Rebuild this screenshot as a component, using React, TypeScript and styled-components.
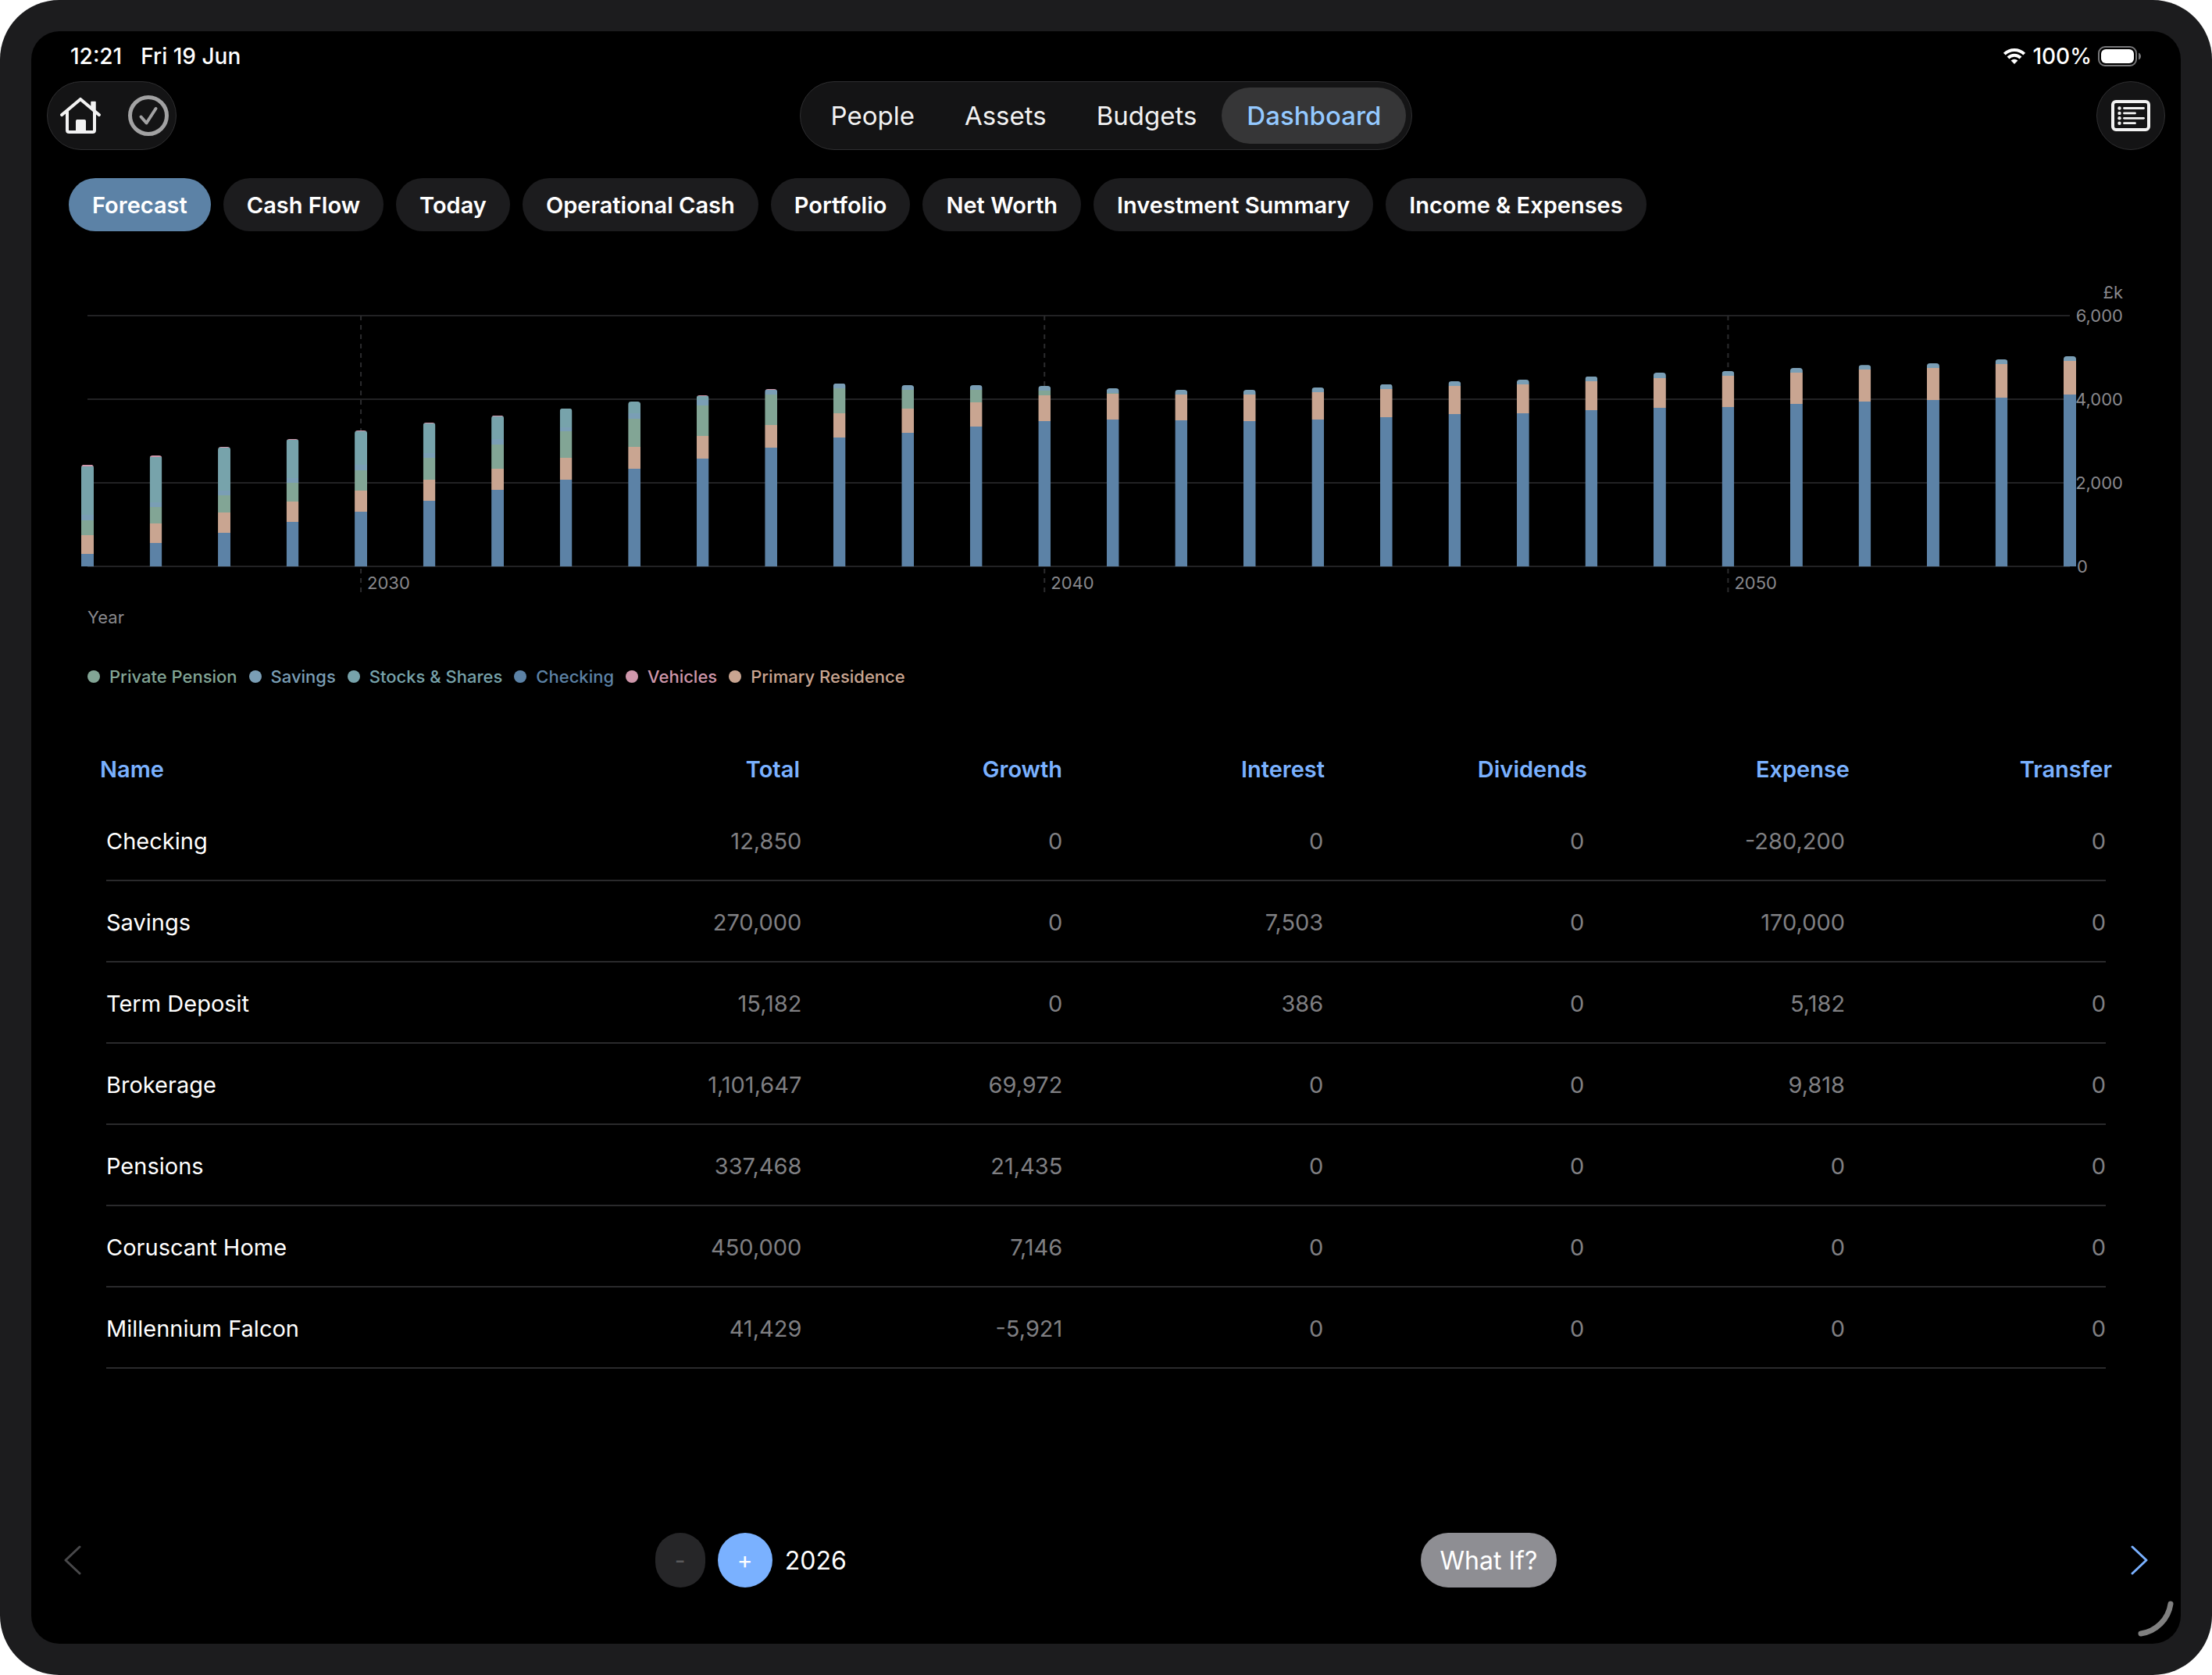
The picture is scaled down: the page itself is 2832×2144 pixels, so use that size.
import React, { useState } from "react";
import styled, { createGlobalStyle } from "styled-components";

const color = {
  bezel: "#1c1c1e",
  glass: "#141415",
  glassEdge: "#2f2f31",
  text: "#ffffff",
  muted: "#7f7f82",
  axis: "#88888c",
  accent: "#7ab1ff",
  grid: "#222224",
  dash: "#2b2b2d",
  divider: "#2a2a2c",
};

const series = {
  checking: { label: "Checking", color: "#5c82a6" },
  residence: { label: "Primary Residence", color: "#c9a591" },
  pension: { label: "Private Pension", color: "#82a595" },
  savings: { label: "Savings", color: "#7a9eb5" },
  stocks: { label: "Stocks & Shares", color: "#77a3ab" },
  vehicles: { label: "Vehicles", color: "#cf97ab" },
};
type SeriesKey = keyof typeof series;

const stackOrder: SeriesKey[] = ["checking", "residence", "pension", "savings", "stocks", "vehicles"];
const legendOrder: SeriesKey[] = ["pension", "savings", "stocks", "checking", "vehicles", "residence"];

const firstYear = 2026;
// One row per year, in thousands, in stack order.
const forecast: number[][] = [
  [303, 444, 348, 142, 1159, 39],
  [560, 470, 393, 109, 1088, 32],
  [805, 489, 406, 116, 1030, 13],
  [1069, 483, 451, 109, 920, 13],
  [1307, 509, 489, 116, 811, 19],
  [1571, 502, 528, 116, 708, 13],
  [1835, 502, 579, 122, 560, 13],
  [2073, 528, 624, 103, 451, 0],
  [2337, 521, 676, 129, 283, 0],
  [2581, 541, 734, 116, 97, 26],
  [2845, 541, 727, 116, 0, 13],
  [3083, 579, 599, 116, 0, 0],
  [3199, 579, 444, 116, 0, 0],
  [3347, 579, 296, 116, 0, 0],
  [3476, 618, 109, 116, 0, 0],
  [3515, 618, 19, 109, 0, 0],
  [3495, 618, 0, 109, 0, 0],
  [3476, 637, 0, 109, 0, 0],
  [3515, 657, 0, 109, 0, 0],
  [3573, 669, 0, 116, 0, 0],
  [3643, 676, 0, 109, 0, 0],
  [3663, 695, 0, 109, 0, 0],
  [3740, 689, 0, 116, 0, 0],
  [3798, 708, 0, 129, 0, 0],
  [3812, 748, 0, 113, 0, 0],
  [3885, 748, 0, 113, 0, 0],
  [3945, 768, 0, 107, 0, 0],
  [3979, 768, 0, 113, 0, 0],
  [4039, 801, 0, 113, 0, 0],
  [4112, 801, 0, 113, 0, 0],
];

const columns = ["Name", "Total", "Growth", "Interest", "Dividends", "Expense", "Transfer"];
const accounts: string[][] = [
  ["Checking", "12,850", "0", "0", "0", "-280,200", "0"],
  ["Savings", "270,000", "0", "7,503", "0", "170,000", "0"],
  ["Term Deposit", "15,182", "0", "386", "0", "5,182", "0"],
  ["Brokerage", "1,101,647", "69,972", "0", "0", "9,818", "0"],
  ["Pensions", "337,468", "21,435", "0", "0", "0", "0"],
  ["Coruscant Home", "450,000", "7,146", "0", "0", "0", "0"],
  ["Millennium Falcon", "41,429", "-5,921", "0", "0", "0", "0"],
];

const sections = ["People", "Assets", "Budgets", "Dashboard"];
const reports = [
  "Forecast",
  "Cash Flow",
  "Today",
  "Operational Cash",
  "Portfolio",
  "Net Worth",
  "Investment Summary",
  "Income & Expenses",
];

const GlobalStyle = createGlobalStyle`
  * { box-sizing: border-box; }
  body {
    margin: 0;
    background: #ffffff;
    font-family: Inter, "Liberation Sans", sans-serif;
    color: ${color.text};
  }
  button {
    margin: 0;
    padding: 0;
    border: 0;
    background: none;
    color: inherit;
    font: inherit;
    cursor: pointer;
  }
  svg { display: block; }
`;

const Device = styled.div`
  display: flex;
  min-height: 100vh;
  padding: 40px;
  border-radius: 76px;
  background: ${color.bezel};
`;

const Screen = styled.main`
  position: relative;
  flex: 1;
  min-width: 0;
  display: flex;
  flex-direction: column;
  border-radius: 36px;
  background: #000000;
  overflow: hidden;
`;

const StatusBar = styled.div`
  display: flex;
  justify-content: space-between;
  align-items: center;
  height: 64px;
  padding: 0 50px;
  font-size: 28px;
  font-weight: 500;
`;

const StatusGroup = styled.div<{ $gap: number }>`
  display: flex;
  align-items: center;
  gap: ${(p) => p.$gap}px;
`;

const Toolbar = styled.header`
  display: grid;
  grid-template-columns: 1fr auto 1fr;
  align-items: center;
  padding: 0 20px;
`;

const Glass = styled.div`
  display: flex;
  align-items: center;
  height: 88px;
  border: 1px solid ${color.glassEdge};
  border-radius: 44px;
  background: ${color.glass};
`;

const ToolGroup = styled(Glass)`
  justify-self: start;
  gap: 34px;
  padding: 0 8px 0 16px;
`;

const RoundTool = styled(Glass)`
  justify-self: end;
  width: 88px;
  justify-content: center;
`;

const Sections = styled(Glass).attrs({ as: "nav" })`
  padding: 0 7px;
`;

const SectionButton = styled.button<{ $active: boolean }>`
  height: 72px;
  padding: 0 32px;
  border-radius: 36px;
  font-size: 33px;
  font-weight: ${(p) => (p.$active ? 500 : 400)};
  color: ${(p) => (p.$active ? "#94c9ff" : "#f2f2f2")};
  background: ${(p) => (p.$active ? "#363637" : "transparent")};
`;

const Reports = styled.nav`
  display: flex;
  gap: 16px;
  margin-top: 36px;
  padding: 0 48px;
`;

const ReportButton = styled.button<{ $active: boolean }>`
  height: 68px;
  padding: 0 30px;
  border-radius: 34px;
  font-size: 29px;
  font-weight: 600;
  white-space: nowrap;
  background: ${(p) => (p.$active ? "#5c82a6" : color.bezel)};
`;

const ChartFigure = styled.figure`
  margin: 48px 0 0;
  padding: 0 142px 0 72px;
`;

const ChartSvg = styled.svg`
  width: 100%;
  height: 508px;
  overflow: visible;
  font-size: 22px;

  text { fill: ${color.axis}; }
`;

const Legend = styled.ul`
  display: flex;
  gap: 15px;
  height: 28px;
  margin: 0;
  padding: 0;
  list-style: none;
  font-size: 22px;
  font-weight: 500;
`;

const LegendItem = styled.li<{ $color: string }>`
  display: flex;
  align-items: center;
  gap: 12px;
  color: ${(p) => p.$color};

  &::before {
    content: "";
    width: 16px;
    height: 16px;
    border-radius: 50%;
    background: currentColor;
  }
`;

const Table = styled.table`
  display: block;
  margin: 64px 88px 0;
  font-size: 29px;

  thead, tbody { display: block; }
  tbody { padding: 0 8px; }
`;

const Row = styled.tr<{ $head?: boolean }>`
  display: grid;
  grid-template-columns: 5fr repeat(6, 3fr);
  align-items: center;
  height: ${(p) => (p.$head ? 80 : 104)}px;
  border-bottom: ${(p) => (p.$head ? "0" : `2px solid ${color.divider}`)};
`;

const HeadCell = styled.th`
  padding: 0;
  text-align: right;
  font-weight: 600;
  color: ${color.accent};

  &:first-child { text-align: left; }
`;

const NameCell = styled.th`
  padding: 3px 0 0;
  text-align: left;
  font-weight: 400;
  white-space: nowrap;
`;

const ValueCell = styled.td`
  padding: 3px 0 0;
  text-align: right;
  color: ${color.muted};
`;

const Footer = styled.footer`
  display: flex;
  justify-content: space-between;
  align-items: center;
  margin-top: auto;
  padding: 40px 42px 72px;
  font-size: 32px;
`;

const Stepper = styled.div`
  display: flex;
  align-items: center;
  gap: 16px;
`;

const StepButton = styled.button<{ $primary?: boolean }>`
  width: ${(p) => (p.$primary ? 70 : 64)}px;
  height: 70px;
  border-radius: 35px;
  font-size: 30px;
  color: ${(p) => (p.$primary ? "#ffffff" : "#5a5a5c")};
  background: ${(p) => (p.$primary ? color.accent : "#262628")};
`;

const WhatIf = styled.button`
  height: 70px;
  padding: 0 25px;
  border-radius: 35px;
  background: #8e8e93;
`;

const ResizeHandle = styled.svg`
  position: absolute;
  right: 4px;
  bottom: 4px;
`;

function WifiIcon() {
  return (
    <svg width="30" height="22" viewBox="0 0 30 22" fill="none" stroke="#fff" strokeWidth="4" aria-hidden="true">
      <path d="M2.3 8.2A18 18 0 0 1 27.7 8.2" />
      <path d="M7 13A11.3 11.3 0 0 1 23 13" />
      <path d="M15 21 10.6 16.4A6.4 6.4 0 0 1 19.4 16.4Z" fill="#fff" stroke="none" />
    </svg>
  );
}

function BatteryIcon() {
  return (
    <svg width="56" height="26" viewBox="0 0 56 26" aria-hidden="true">
      <rect x="1" y="1" width="48" height="24" rx="8" fill="none" stroke="#777779" strokeWidth="2" />
      <rect x="4" y="4" width="42" height="18" rx="6" fill="#fff" />
      <path d="M52 8.5Q55 10 55 13T52 17.5Z" fill="#777779" />
    </svg>
  );
}

function HomeIcon() {
  return (
    <svg width="52" height="48" viewBox="0 0 52 48" fill="none" stroke="#f2f2f2" strokeLinecap="round" strokeLinejoin="round" aria-hidden="true">
      <path d="M2.2 23 26 3 49.8 23" strokeWidth="4.2" />
      <path d="M9 19V42.5Q9 45 11.5 45H41.5Q44 45 44 42.5V19" strokeWidth="4" />
      <path d="M40 6.5H45V18L40 14Z" fill="#f2f2f2" strokeWidth="1.5" />
      <rect x="20.5" y="29.5" width="12" height="16" rx="1" fill="#f2f2f2" strokeWidth="1" />
    </svg>
  );
}

function CheckIcon() {
  return (
    <svg width="54" height="54" viewBox="0 0 54 54" fill="none" stroke="#a2a2a3" strokeLinecap="round" strokeLinejoin="round" aria-hidden="true">
      <circle cx="27" cy="27" r="23.5" strokeWidth="5" />
      <path d="M17.5 28.5 24.5 36.5 36.5 18" strokeWidth="4" />
    </svg>
  );
}

function ListIcon() {
  const lines = [27, 16, 27, 16];
  return (
    <svg width="52" height="40" viewBox="0 0 52 40" fill="none" stroke="#f2f2f2" strokeLinecap="round" aria-hidden="true">
      <rect x="3" y="2" width="46" height="36" rx="4" strokeWidth="4" />
      {lines.map((length, i) => {
        const y = 10.5 + i * 6.4;
        return (
          <g key={i}>
            <circle cx="11.5" cy={y} r="2.2" fill="#f2f2f2" stroke="none" />
            <path d={`M17.5 ${y}h${length - 2}`} strokeWidth="2.8" />
          </g>
        );
      })}
    </svg>
  );
}

function Chevron({ direction, stroke }: { direction: "left" | "right"; stroke: string }) {
  return (
    <svg width="22" height="38" viewBox="0 0 22 38" fill="none" stroke={stroke} strokeWidth="3" strokeLinecap="round" strokeLinejoin="round" aria-hidden="true">
      <path d={direction === "left" ? "M20 2 2 19 20 36" : "M2 2 20 19 2 36"} />
    </svg>
  );
}

const plotTop = 60;
const plotHeight = 321;
const maxValue = 6000;
const yFor = (value: number) => plotTop + plotHeight * (1 - value / maxValue);

function Bar({ values, index }: { values: number[]; index: number }) {
  const top = yFor(values.reduce((sum, v) => sum + v, 0));
  let total = 0;
  return (
    <svg x={`${(index / (forecast.length - 1)) * 100}%`} overflow="visible">
      <clipPath id={`bar-${index}`}>
        <path d={`M-8 ${yFor(0)}V${top + 4}q0-4 4-4h8q4 0 4 4V${yFor(0)}Z`} />
      </clipPath>
      <g clipPath={`url(#bar-${index})`}>
        {values.map((value, i) => {
          const bottom = Math.round(yFor(total));
          total += value;
          const segmentTop = Math.round(yFor(total));
          return (
            <rect
              key={stackOrder[i]}
              x="-8"
              y={segmentTop}
              width="16"
              height={bottom - segmentTop}
              fill={series[stackOrder[i]].color}
            />
          );
        })}
      </g>
    </svg>
  );
}

function ForecastChart() {
  return (
    <ChartSvg role="img" aria-label="Forecast by year">
      {[0, 2000, 4000, 6000].map((value) => (
        <g key={value}>
          <line x1="0" x2="100%" y1={yFor(value)} y2={yFor(value)} stroke={color.grid} strokeWidth="2" />
          <svg x="100%" overflow="visible">
            <text x={value ? 68 : 9} y={yFor(value) + 8} textAnchor={value ? "end" : "start"}>
              {value.toLocaleString("en-GB")}
            </text>
          </svg>
        </g>
      ))}
      <svg x="100%" overflow="visible">
        <text x="68" y="38" textAnchor="end">£k</text>
      </svg>
      {[2030, 2040, 2050].map((year) => (
        <svg key={year} x={`${((year - firstYear) / (forecast.length - 1)) * 100}%`} overflow="visible">
          <line y1={plotTop} y2={plotTop + 354} stroke={color.dash} strokeWidth="2" strokeDasharray="6 6" />
          <text x="8" y="410">{year}</text>
        </svg>
      ))}
      {forecast.map((values, i) => (
        <Bar key={i} values={values} index={i} />
      ))}
      <text x="0" y="454">Year</text>
    </ChartSvg>
  );
}

export default function App() {
  const [section, setSection] = useState("Dashboard");
  const [report, setReport] = useState("Forecast");
  const [year, setYear] = useState(firstYear);

  return (
    <>
      <GlobalStyle />
      <Device>
        <Screen>
          <StatusBar>
            <StatusGroup $gap={24}>
              <span>12:21</span>
              <span>Fri 19 Jun</span>
            </StatusGroup>
            <StatusGroup $gap={8}>
              <WifiIcon />
              <span>100%</span>
              <BatteryIcon />
            </StatusGroup>
          </StatusBar>

          <Toolbar>
            <ToolGroup>
              <button aria-label="Home"><HomeIcon /></button>
              <button aria-label="Done"><CheckIcon /></button>
            </ToolGroup>
            <Sections>
              {sections.map((name) => (
                <SectionButton key={name} $active={name === section} onClick={() => setSection(name)}>
                  {name}
                </SectionButton>
              ))}
            </Sections>
            <RoundTool as="button" aria-label="List"><ListIcon /></RoundTool>
          </Toolbar>

          <Reports>
            {reports.map((name) => (
              <ReportButton key={name} $active={name === report} onClick={() => setReport(name)}>
                {name}
              </ReportButton>
            ))}
          </Reports>

          <ChartFigure>
            <ForecastChart />
            <Legend>
              {legendOrder.map((key) => (
                <LegendItem key={key} $color={series[key].color}>{series[key].label}</LegendItem>
              ))}
            </Legend>
          </ChartFigure>

          <Table>
            <thead>
              <Row $head>
                {columns.map((name) => (
                  <HeadCell key={name} scope="col">{name}</HeadCell>
                ))}
              </Row>
            </thead>
            <tbody>
              {accounts.map(([name, ...values]) => (
                <Row key={name}>
                  <NameCell scope="row">{name}</NameCell>
                  {values.map((value, i) => (
                    <ValueCell key={i}>{value}</ValueCell>
                  ))}
                </Row>
              ))}
            </tbody>
          </Table>

          <Footer>
            <button aria-label="Previous"><Chevron direction="left" stroke="#48484a" /></button>
            <Stepper>
              <StepButton aria-label="Earlier year" disabled={year === firstYear} onClick={() => setYear(year - 1)}>-</StepButton>
              <StepButton $primary aria-label="Later year" onClick={() => setYear(year + 1)}>+</StepButton>
              <span>{year}</span>
            </Stepper>
            <WhatIf>What If?</WhatIf>
            <button aria-label="Next"><Chevron direction="right" stroke={color.accent} /></button>
          </Footer>

          <ResizeHandle width="52" height="52" viewBox="0 0 52 52" fill="none" aria-hidden="true">
            <path d="M43 5A45 45 0 0 1 5 43" stroke="#808080" strokeWidth="7" strokeLinecap="round" />
          </ResizeHandle>
        </Screen>
      </Device>
    </>
  );
}
